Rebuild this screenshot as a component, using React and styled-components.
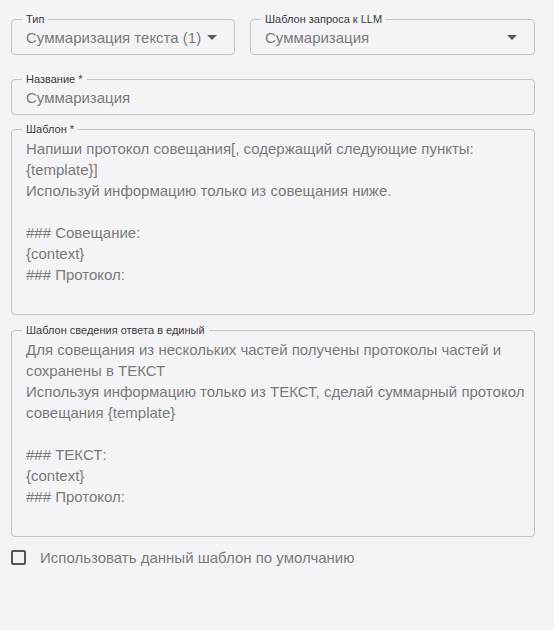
import React from 'react';
import styled, { createGlobalStyle } from 'styled-components';

const Global = createGlobalStyle`
  html, body {
    margin: 0;
    background: #f4f4f7;
    font-family: "Liberation Sans", Arial, sans-serif;
  }
`;

const Page = styled.div`
  padding: 19px 19px 40px 11px;
  display: flex;
  flex-direction: column;
`;

const Row = styled.div`
  display: flex;
  gap: 15px;
  margin-bottom: ${p => p.$mb || 0}px;
`;

const Field = styled.div`
  position: relative;
  box-sizing: border-box;
  width: ${p => p.$w ? `${p.$w}px` : 'auto'};
  flex: ${p => p.$grow ? 1 : 'none'};
  border: 1px solid #c6c6c9;
  border-radius: 4px;
  margin-bottom: ${p => p.$mb || 0}px;
`;

const Label = styled.span`
  position: absolute;
  top: -7px;
  left: 10px;
  padding: 0 4px;
  background: #f4f4f7;
  font-size: 11px;
  line-height: 12px;
  color: #3a3a3a;
  white-space: nowrap;
`;

const Value = styled.div`
  height: 34px;
  display: flex;
  align-items: center;
  justify-content: space-between;
  padding: 0 17px 0 14px;
  font-size: 15px;
  color: #7a7a7a;
`;

const Arrow = styled.span`
  width: 0;
  height: 0;
  border-left: 5px solid transparent;
  border-right: 5px solid transparent;
  border-top: 5px solid #5a5a5a;
`;

const Area = styled.div`
  padding: 8px 8px 29px 14px;
  font-size: 15px;
  line-height: 21px;
  color: #7a7a7a;
  white-space: pre-wrap;
`;

const Check = styled.label`
  display: flex;
  align-items: center;
  gap: 14px;
  font-size: 15px;
  color: #7a7a7a;
  margin-top: 12px;
`;

const Box = styled.span`
  width: 15px;
  height: 15px;
  box-sizing: border-box;
  border: 2px solid #555;
  border-radius: 2px;
`;

const template = `Напиши протокол совещания[, содержащий следующие пункты:
{template}]
Используй информацию только из совещания ниже.

### Совещание:
{context}
### Протокол:`;

const reduce = `Для совещания из нескольких частей получены протоколы частей и сохранены в ТЕКСТ
Используя информацию только из ТЕКСТ, сделай суммарный протокол совещания {template}

### ТЕКСТ:
{context}
### Протокол:`;

export default function App() {
  return (
    <>
      <Global />
      <Page>
        <Row $mb={24}>
          <Field $w={224}>
            <Label>Тип</Label>
            <Value>Суммаризация текста (1) <Arrow /></Value>
          </Field>
          <Field $grow>
            <Label>Шаблон запроса к LLM</Label>
            <Value>Суммаризация <Arrow /></Value>
          </Field>
        </Row>
        <Field $mb={14}>
          <Label>Название *</Label>
          <Value>Суммаризация</Value>
        </Field>
        <Field $mb={15}>
          <Label>Шаблон *</Label>
          <Area>{template}</Area>
        </Field>
        <Field>
          <Label>Шаблон сведения ответа в единый</Label>
          <Area>{reduce}</Area>
        </Field>
        <Check>
          <Box />
          Использовать данный шаблон по умолчанию
        </Check>
      </Page>
    </>
  );
}
